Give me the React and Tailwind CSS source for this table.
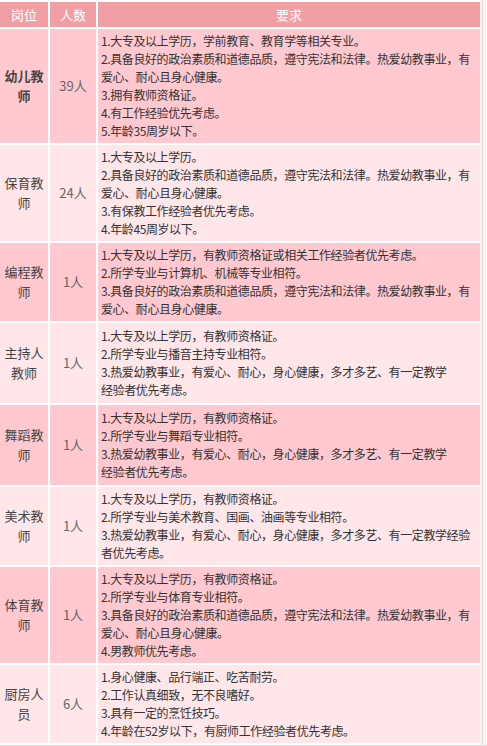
import React from "react";

const rows = [
  {
    title: ["幼儿教", "师"],
    count: "39人",
    bold: true,
    lines: [
      "1.大专及以上学历，学前教育、教育学等相关专业。",
      "2.具备良好的政治素质和道德品质，遵守宪法和法律。热爱幼教事业，有",
      "爱心、耐心且身心健康。",
      "3.拥有教师资格证。",
      "4.有工作经验优先考虑。",
      "5.年龄35周岁以下。",
    ],
  },
  {
    title: ["保育教", "师"],
    count: "24人",
    lines: [
      "1.大专及以上学历。",
      "2.具备良好的政治素质和道德品质，遵守宪法和法律。热爱幼教事业，有",
      "爱心、耐心且身心健康。",
      "3.有保教工作经验者优先考虑。",
      "4.年龄45周岁以下。",
    ],
  },
  {
    title: ["编程教", "师"],
    count: "1人",
    lines: [
      "1.大专及以上学历，有教师资格证或相关工作经验者优先考虑。",
      "2.所学专业与计算机、机械等专业相符。",
      "3.具备良好的政治素质和道德品质，遵守宪法和法律。热爱幼教事业，有",
      "爱心、耐心且身心健康。",
    ],
  },
  {
    title: ["主持人", "教师"],
    count: "1人",
    tall: true,
    lines: [
      "1.大专及以上学历，有教师资格证。",
      "2.所学专业与播音主持专业相符。",
      "3.热爱幼教事业，有爱心、耐心，身心健康，多才多艺、有一定教学",
      "经验者优先考虑。",
    ],
  },
  {
    title: ["舞蹈教", "师"],
    count: "1人",
    tall: true,
    lines: [
      "1.大专及以上学历，有教师资格证。",
      "2.所学专业与舞蹈专业相符。",
      "3.热爱幼教事业，有爱心、耐心，身心健康，多才多艺、有一定教学",
      "经验者优先考虑。",
    ],
  },
  {
    title: ["美术教", "师"],
    count: "1人",
    lines: [
      "1.大专及以上学历，有教师资格证。",
      "2.所学专业与美术教育、国画、油画等专业相符。",
      "3.热爱幼教事业，有爱心、耐心，身心健康，多才多艺、有一定教学经验",
      "者优先考虑。",
    ],
  },
  {
    title: ["体育教", "师"],
    count: "1人",
    lines: [
      "1.大专及以上学历，有教师资格证。",
      "2.所学专业与体育专业相符。",
      "3.具备良好的政治素质和道德品质，遵守宪法和法律。热爱幼教事业，有",
      "爱心、耐心且身心健康。",
      "4.男教师优先考虑。",
    ],
  },
  {
    title: ["厨房人", "员"],
    count: "6人",
    lines: [
      "1.身心健康、品行端正、吃苦耐劳。",
      "2.工作认真细致，无不良嗜好。",
      "3.具有一定的烹饪技巧。",
      "4.年龄在52岁以下，有厨师工作经验者优先考虑。",
    ],
  },
];

const App = () => {
  return (
    <div
      className="w-[487px] h-[746px] flex flex-col bg-white overflow-hidden"
      style={{ fontFamily: '"Microsoft YaHei", "Noto Sans CJK SC", sans-serif' }}
    >
      <div className="flex flex-1">
        <div className="w-[480px] pt-[2px]">
          <table className="w-[480px] border-separate border-spacing-0 table-fixed">
            <colgroup>
              <col className="w-[50px]" />
              <col className="w-[48px]" />
              <col />
            </colgroup>
            <thead>
              <tr className="bg-[#f0a0a5] text-white text-[13px]">
                <th className="h-[27px] font-normal border-r-2 border-b-2 border-white">岗位</th>
                <th className="font-normal border-r-2 border-b-2 border-white">人数</th>
                <th className="font-normal border-b-2 border-white">要求</th>
              </tr>
            </thead>
            <tbody>
              {rows.map((row, i) => (
                <tr key={i} className={i % 2 === 0 ? "bg-[#ffc9cf]" : "bg-[#ffe6e9]"}>
                  <td
                    className={
                      "border-r-2 border-b-2 border-white text-center text-[13px] leading-[20px] text-[#444] " +
                      (row.bold ? "font-bold" : "")
                    }
                  >
                    {row.title.map((t) => (
                      <div key={t}>{t}</div>
                    ))}
                  </td>
                  <td className="border-r-2 border-b-2 border-white text-center text-[13px] text-[#666]">
                    {row.count}
                  </td>
                  <td
                    className={
                      "border-b-2 border-white pl-[3px] text-[12px] tracking-[-0.4px] leading-[18px] text-[#333] " +
                      (row.tall ? "py-[4px]" : "py-[3px]")
                    }
                  >
                    {row.lines.map((line, j) => (
                      <div key={j} className="whitespace-nowrap">
                        {line}
                      </div>
                    ))}
                  </td>
                </tr>
              ))}
            </tbody>
          </table>
        </div>
        <div className="w-[3px] bg-[#fcf0f1] border-r border-[#e6dadb]" />
        <div className="flex-1 bg-[#fcf3f4]" />
      </div>
      <div className="h-[4px] bg-[#dedada]" />
    </div>
  );
};

export default App;
